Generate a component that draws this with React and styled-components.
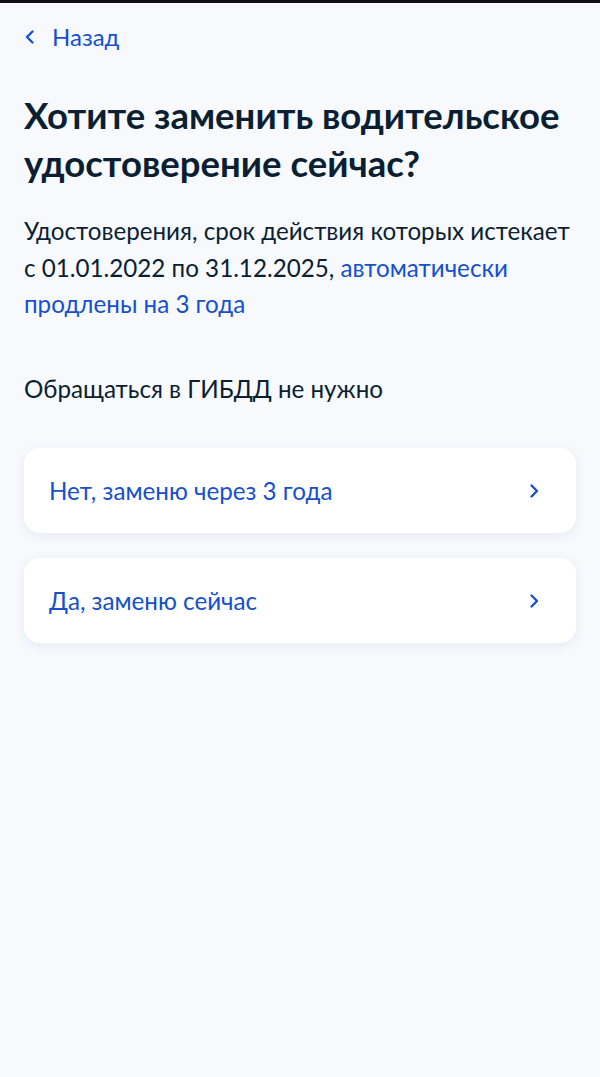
import React from 'react'
import styled, { createGlobalStyle } from 'styled-components'

const GlobalStyle = createGlobalStyle`
  html, body {
    margin: 0;
    padding: 0;
    background: #f7f9fc;
    font-family: Lato, "Noto Sans", sans-serif;
  }
`

const Screen = styled.div`
  min-height: 1077px;
  border-top: 3px solid #111;
  box-sizing: border-box;
  padding: 0 24px;
  background: #f7f9fc;
`

const Back = styled.a`
  display: flex;
  align-items: center;
  gap: 17px;
  height: 67px;
  padding-left: 1px;
  color: #1650cc;
  font-size: 24px;
  text-decoration: none;
`

const Title = styled.h1`
  margin: 21px 0 0;
  font-size: 36.5px;
  line-height: 48px;
  font-weight: 700;
  color: #0b1f33;
`

const Text = styled.p`
  margin: 26px 0 0;
  font-size: 24.2px;
  line-height: 36.5px;
  color: #0b1f33;
`

const Link = styled.span`
  color: #1650cc;
`

const Note = styled(Text)`
  margin-top: 48px;
`

const Options = styled.div`
  display: flex;
  flex-direction: column;
  gap: 25px;
  margin-top: 41px;
`

const Option = styled.button`
  display: flex;
  align-items: center;
  justify-content: space-between;
  height: 85px;
  padding: 0 37px 0 25px;
  border: none;
  border-radius: 16px;
  background: #fff;
  box-shadow: 0 3px 12px rgba(30, 60, 140, 0.08);
  font-family: inherit;
  font-size: 24.2px;
  color: #1650cc;
  text-align: left;
  cursor: pointer;
`

const Chevron = ({ dir = 'right' }) => (
  <svg width="10" height="16" viewBox="0 0 10 16" fill="none">
    <path
      d={dir === 'right' ? 'M2.5 2.5L8 8l-5.5 5.5' : 'M7.5 2.5L2 8l5.5 5.5'}
      stroke="#1650cc"
      strokeWidth="2.4"
      strokeLinecap="round"
      strokeLinejoin="round"
    />
  </svg>
)

const answers = ['Нет, заменю через 3 года', 'Да, заменю сейчас']

export default function App() {
  return (
    <>
      <GlobalStyle />
      <Screen>
        <Back href="#">
          <Chevron dir="left" />
          Назад
        </Back>
        <Title>Хотите заменить водительское удостоверение сейчас?</Title>
        <Text>
          Удостоверения, срок действия которых истекает с 01.01.2022 по
          31.12.2025, <Link>автоматически продлены на 3 года</Link>
        </Text>
        <Note>Обращаться в ГИБДД не нужно</Note>
        <Options>
          {answers.map((a) => (
            <Option key={a}>
              {a}
              <Chevron />
            </Option>
          ))}
        </Options>
      </Screen>
    </>
  )
}
